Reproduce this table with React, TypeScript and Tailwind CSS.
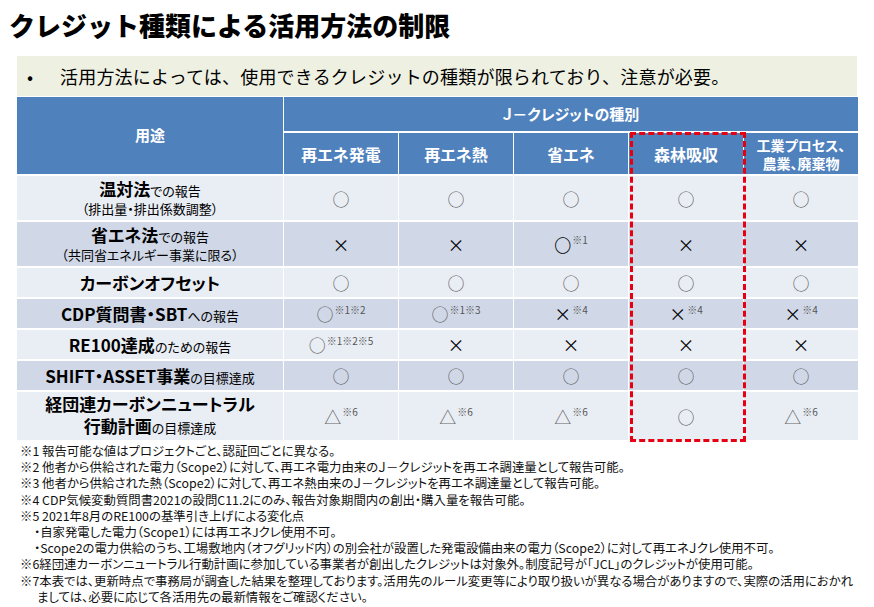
import React from "react";

type Sym = "o" | "O" | "x" | "t";
type Cell = { s: Sym; note?: string };

const c = (s: Sym, note?: string): Cell => ({ s, note });

const rows: { label: React.ReactNode; dark: boolean; cells: Cell[] }[] = [
  {
    label: (
      <>
        <div className="leading-[19px]">
          <span className="text-[17px] font-bold">温対法</span>
          <span className="text-[13px]">での報告</span>
        </div>
        <div className="text-[13px] leading-[17px]">（排出量・排出係数調整）</div>
      </>
    ),
    dark: false,
    cells: [c("o"), c("o"), c("o"), c("o"), c("o")],
  },
  {
    label: (
      <>
        <div className="leading-[19px]">
          <span className="text-[17px] font-bold">省エネ法</span>
          <span className="text-[13px]">での報告</span>
        </div>
        <div className="text-[13px] leading-[17px]">（共同省エネルギー事業に限る）</div>
      </>
    ),
    dark: true,
    cells: [c("x"), c("x"), c("O", "※1"), c("x"), c("x")],
  },
  {
    label: <span className="text-[17px] font-bold">カーボンオフセット</span>,
    dark: false,
    cells: [c("o"), c("o"), c("o"), c("o"), c("o")],
  },
  {
    label: (
      <div>
        <span className="text-[17px] font-bold">CDP質問書・SBT</span>
        <span className="text-[13px]">への報告</span>
      </div>
    ),
    dark: true,
    cells: [c("o", "※1※2"), c("o", "※1※3"), c("x", "※4"), c("x", "※4"), c("x", "※4")],
  },
  {
    label: (
      <div>
        <span className="text-[17px] font-bold">RE100達成</span>
        <span className="text-[13px]">のための報告</span>
      </div>
    ),
    dark: false,
    cells: [c("o", "※1※2※5"), c("x"), c("x"), c("x"), c("x")],
  },
  {
    label: (
      <div>
        <span className="text-[17px] font-bold">SHIFT・ASSET事業</span>
        <span className="text-[13px]">の目標達成</span>
      </div>
    ),
    dark: true,
    cells: [c("o"), c("o"), c("o"), c("o"), c("o")],
  },
  {
    label: (
      <>
        <div className="text-[17px] font-bold leading-[22px]">経団連カーボンニュートラル</div>
        <div className="leading-[22px]">
          <span className="text-[17px] font-bold">行動計画</span>
          <span className="text-[13px]">の目標達成</span>
        </div>
      </>
    ),
    dark: false,
    cells: [c("t", "※6"), c("t", "※6"), c("t", "※6"), c("o"), c("t", "※6")],
  },
];

function Symbol({ cell }: { cell: Cell }) {
  let glyph = null;
  if (cell.s === "o") glyph = <span className="text-[17px] text-[#666]">○</span>;
  if (cell.s === "O") glyph = <span className="text-[17px] font-black text-black">○</span>;
  if (cell.s === "x") glyph = <span className="text-[17px] text-black">×</span>;
  if (cell.s === "t") glyph = <span className="text-[17px] text-[#666]">△</span>;
  return (
    <div className="flex items-center justify-center leading-none">
      {glyph}
      {cell.note && <span className="relative -top-[4px] ml-[1px] text-[10px] text-[#555]">{cell.note}</span>}
    </div>
  );
}

const heads = ["再エネ発電", "再エネ熱", "省エネ", "森林吸収"];

export default function App() {
  return (
    <div className="w-[874px] h-[607px] overflow-hidden bg-white text-black font-['Noto_Sans_CJK_JP','Noto_Sans',sans-serif]">
      <div className="h-[56px] pl-[9px] pt-[7px] text-[26px] font-black leading-[36px]">
        クレジット種類による活用方法の制限
      </div>

      <div className="mx-[17px] flex h-[40px] items-center bg-[#eef0e2] text-[18px]">
        <span className="w-[43px] pl-[10px]">•</span>
        <span className="tracking-[0.2px]">活用方法によっては、使用できるクレジットの種類が限られており、注意が必要。</span>
      </div>

      <div className="relative mx-[17px] mt-[1px]">
        <div className="grid grid-cols-[266px_repeat(5,114px)] grid-rows-[34px_41px_44px_44px_29px_29px_29px_29px_48px] gap-x-[1px] gap-y-[2px] bg-white [font-feature-settings:'palt']">
          <div className="col-start-1 row-start-1 row-span-2 flex items-center justify-center bg-[#4f81bd] text-[15px] font-bold text-white">
            用途
          </div>
          <div className="col-start-2 col-span-5 row-start-1 flex items-center justify-center bg-[#4f81bd] text-[15px] font-bold text-white">
            Ｊ－クレジットの種別
          </div>
          {heads.map((h) => (
            <div key={h} className="flex items-center justify-center bg-[#4f81bd] text-[16px] font-bold text-white">
              {h}
            </div>
          ))}
          <div className="flex flex-col items-center justify-center bg-[#4f81bd] text-[14px] font-bold leading-[18px] text-white">
            <span>工業プロセス、</span>
            <span>農業、廃棄物</span>
          </div>

          {rows.map((r, i) => (
            <React.Fragment key={i}>
              <div className={`flex flex-col items-center justify-center ${r.dark ? "bg-[#d0d8e8]" : "bg-[#e9edf4]"}`}>
                {r.label}
              </div>
              {r.cells.map((cell, j) => (
                <div key={j} className={`flex items-center justify-center ${r.dark ? "bg-[#d0d8e8]" : "bg-[#e9edf4]"}`}>
                  <Symbol cell={cell} />
                </div>
              ))}
            </React.Fragment>
          ))}
        </div>

        {/* 森林吸収 column highlight */}
        <div className="pointer-events-none absolute left-[613px] top-[35px] bottom-[-2px] w-[116px] border-[3px] border-dashed border-[#e60012]" />
      </div>

      <div className="mt-[3px] pl-[20px] text-[12.4px] leading-[16.2px] text-[#111] [font-feature-settings:'palt'] whitespace-nowrap">
        <div>※1 報告可能な値はプロジェクトごと、認証回ごとに異なる。</div>
        <div>※2 他者から供給された電力（Scope2）に対して、再エネ電力由来のＪ－クレジットを再エネ調達量として報告可能。</div>
        <div>※3 他者から供給された熱（Scope2）に対して、再エネ熱由来のＪ－クレジットを再エネ調達量として報告可能。</div>
        <div>※4 CDP気候変動質問書2021の設問C11.2にのみ、報告対象期間内の創出・購入量を報告可能。</div>
        <div>※5 2021年8月のRE100の基準引き上げによる変化点</div>
        <div className="pl-[14px]">・自家発電した電力（Scope1）には再エネJクレ使用不可。</div>
        <div className="pl-[14px]">・Scope2の電力供給のうち、工場敷地内（オフグリッド内）の別会社が設置した発電設備由来の電力（Scope2）に対して再エネＪクレ使用不可。</div>
        <div>※6経団連カーボンニュートラル行動計画に参加している事業者が創出したクレジットは対象外。制度記号が「JCL」のクレジットが使用可能。</div>
        <div>※7本表では、更新時点で事務局が調査した結果を整理しております。活用先のルール変更等により取り扱いが異なる場合がありますので、実際の活用におかれ</div>
        <div className="pl-[17px]">ましては、必要に応じて各活用先の最新情報をご確認ください。</div>
      </div>
    </div>
  );
}
